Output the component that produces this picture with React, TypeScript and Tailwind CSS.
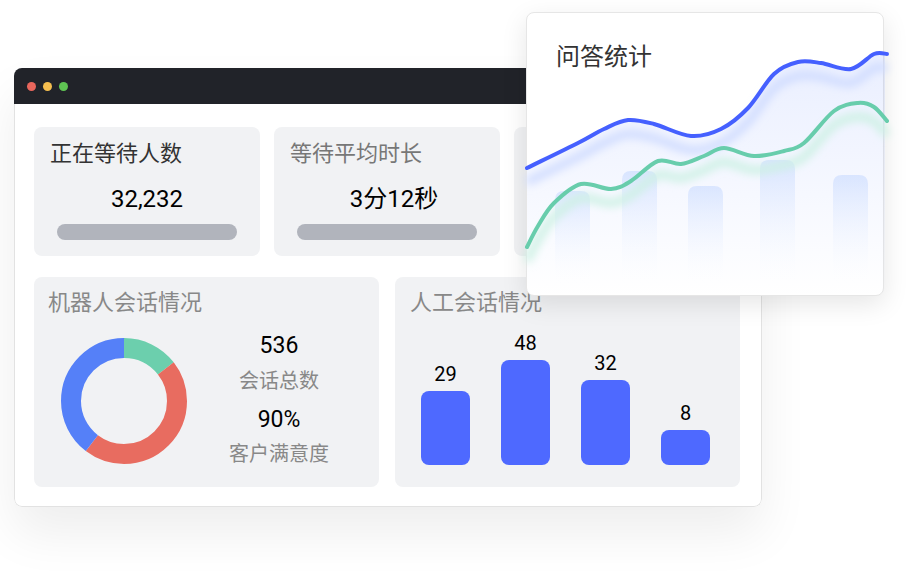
const font = { fontFamily: 'Roboto, "Noto Sans CJK SC", sans-serif' };

type Pt = [number, number];

// catmull-rom -> cubic bezier, so the chart curves pass through the sampled points
function smooth(pts: Pt[]) {
  let d = `M${pts[0][0]},${pts[0][1]}`;
  for (let i = 0; i < pts.length - 1; i++) {
    const p0 = pts[i - 1] || pts[i];
    const p1 = pts[i];
    const p2 = pts[i + 1];
    const p3 = pts[i + 2] || p2;
    const c1x = p1[0] + (p2[0] - p0[0]) / 6;
    const c1y = p1[1] + (p2[1] - p0[1]) / 6;
    const c2x = p2[0] - (p3[0] - p1[0]) / 6;
    const c2y = p2[1] - (p3[1] - p1[1]) / 6;
    d += ` C${c1x.toFixed(1)},${c1y.toFixed(1)} ${c2x.toFixed(1)},${c2y.toFixed(1)} ${p2[0]},${p2[1]}`;
  }
  return d;
}

const bluePts: Pt[] = [
  [0, 155], [51, 130], [77, 116], [101, 107], [127, 111], [164, 123], [194, 116],
  [221, 95], [247, 61], [271, 49], [294, 50], [324, 56], [347, 41], [360, 41],
];
const greenPts: Pt[] = [
  [0, 234], [11, 213], [27, 190], [54, 171], [84, 176], [104, 168], [131, 148],
  [154, 151], [177, 143], [197, 135], [227, 143], [257, 138], [277, 130],
  [307, 98], [331, 90], [347, 94], [360, 108],
];
const bluePath = smooth(bluePts);
const greenPath = smooth(greenPts);

const bgBars = [
  { x: 28, top: 178 },
  { x: 95, top: 158 },
  { x: 161, top: 173 },
  { x: 233, top: 147 },
  { x: 306, top: 162 },
];

function StatCard({ title, value, dark, shift }: { title: string; value: string; dark?: boolean; shift?: boolean }) {
  return (
    <div className="bg-[#f1f2f4] rounded-[8px] h-[129px] pt-[13px] px-[16px]">
      <div className={`text-[22px] leading-[28px] ${dark ? 'text-[#333]' : 'text-[#777]'}`}>{title}</div>
      <div className={`mt-[15px] text-center text-[24px] leading-[32px] text-black ${shift ? 'pl-[14px]' : ''}`}>{value}</div>
      <div className="mt-[9px] mx-[7px] h-[16px] rounded-full bg-[#b1b4bc]" />
    </div>
  );
}

function Donut() {
  const c = 2 * Math.PI * 53;
  const segs = [
    { color: '#6ccfad', from: 0, to: 52 },
    { color: '#e86c60', from: 52, to: 217 },
    { color: '#5580f8', from: 217, to: 360 },
  ];
  return (
    <svg width="126" height="126" viewBox="0 0 126 126">
      <g transform="rotate(-90 63 63)">
        {segs.map((s) => (
          <circle
            key={s.color}
            cx="63"
            cy="63"
            r="53"
            fill="none"
            stroke={s.color}
            strokeWidth="20"
            strokeDasharray={`${((s.to - s.from) / 360) * c} ${c}`}
            strokeDashoffset={-(s.from / 360) * c}
          />
        ))}
      </g>
    </svg>
  );
}

const manual = [
  { v: 29, h: 74 },
  { v: 48, h: 105 },
  { v: 32, h: 85 },
  { v: 8, h: 35 },
];

export default function App() {
  return (
    <div className="relative w-[908px] h-[579px] bg-white overflow-hidden pt-[68px] pl-[14px]" style={font}>
      {/* browser window */}
      <div className="w-[748px] h-[439px] rounded-[8px] overflow-hidden shadow-[0_26px_50px_rgba(0,0,0,0.07)] flex flex-col">
        <div className="h-[36px] bg-[#212329] flex items-center gap-[7px] pl-[13px] shrink-0">
          <span className="w-[9px] h-[9px] rounded-full bg-[#e8665c]" />
          <span className="w-[9px] h-[9px] rounded-full bg-[#f5be4f]" />
          <span className="w-[9px] h-[9px] rounded-full bg-[#5fc453]" />
        </div>
        <div className="flex-1 bg-white border-x border-b border-[#e2e2e2] rounded-b-[8px] pt-[23px] pl-[19px] pr-[21px]">
          <div className="grid grid-cols-3 gap-[14px]">
            <StatCard title="正在等待人数" value="32,232" dark />
            <StatCard title="等待平均时长" value="3分12秒" shift />
            <StatCard title="今日解决率" value="96%" />
          </div>
          <div className="grid grid-cols-2 gap-[16px] mt-[21px]">
            <div className="bg-[#f1f2f4] rounded-[8px] h-[210px] pt-[12px] px-[14px]">
              <div className="text-[22px] leading-[28px] text-[#888]">机器人会话情况</div>
              <div className="flex items-start">
                <div className="mt-[21px] ml-[13px]">
                  <Donut />
                </div>
                <div className="ml-[32px] w-[120px] pt-[14px] flex flex-col items-center">
                  <div className="text-[23px] leading-[30px] text-black">536</div>
                  <div className="mt-[6px] text-[20px] leading-[28px] text-[#888]">会话总数</div>
                  <div className="mt-[10px] text-[23px] leading-[30px] text-black">90%</div>
                  <div className="mt-[5px] text-[20px] leading-[28px] text-[#888]">客户满意度</div>
                </div>
              </div>
            </div>
            <div className="bg-[#f1f2f4] rounded-[8px] h-[210px] pt-[12px] pl-[15px] pb-[22px] flex flex-col">
              <div className="text-[22px] leading-[28px] text-[#888]">人工会话情况</div>
              <div className="flex-1 flex items-end gap-[31px] pl-[11px]">
                {manual.map((b) => (
                  <div key={b.v} className="flex flex-col items-center w-[49px]">
                    <div className="text-[20px] leading-[24px] text-black mb-[5px]">{b.v}</div>
                    <div className="w-[49px] rounded-[8px] bg-[#4e69ff]" style={{ height: b.h }} />
                  </div>
                ))}
              </div>
            </div>
          </div>
        </div>
      </div>

      {/* floating chart card */}
      <div className="absolute left-[526px] top-[12px] w-[358px] h-[284px] bg-white rounded-[8px] border border-[#e6e6e6] shadow-[0_8px_26px_rgba(0,0,0,0.1)]">
        <svg className="absolute inset-0 overflow-visible" width="358" height="284" viewBox="0 0 358 284">
          <defs>
            <linearGradient id="barFill" x1="0" y1="0" x2="0" y2="1">
              <stop offset="0" stopColor="#e2ecff" />
              <stop offset="1" stopColor="#ffffff" stopOpacity="0" />
            </linearGradient>
            <linearGradient id="areaFill" x1="0" y1="0" x2="0" y2="1">
              <stop offset="0" stopColor="#5a80ff" stopOpacity="0.13" />
              <stop offset="1" stopColor="#5a80ff" stopOpacity="0" />
            </linearGradient>
            <filter id="glow" x="-10%" y="-30%" width="120%" height="160%">
              <feGaussianBlur stdDeviation="4" />
            </filter>
          </defs>
          {bgBars.map((b) => (
            <path
              key={b.x}
              d={`M${b.x},273 V${b.top + 9} Q${b.x},${b.top} ${b.x + 9},${b.top} H${b.x + 26} Q${b.x + 35},${b.top} ${b.x + 35},${b.top + 9} V273 Z`}
              fill="url(#barFill)"
            />
          ))}
          <path d={`${bluePath} L358,41 L358,276 Q358,284 350,284 L8,284 Q0,284 0,276 Z`} fill="url(#areaFill)" />
          <g filter="url(#glow)" transform="translate(0 14)">
            <path d={bluePath} fill="none" stroke="#cfdbff" strokeWidth="8" />
            <path d={greenPath} fill="none" stroke="#cdf1e4" strokeWidth="8" />
          </g>
          <path d={bluePath} fill="none" stroke="#4560ff" strokeWidth="4" strokeLinecap="round" />
          <path d={greenPath} fill="none" stroke="#68cdac" strokeWidth="4" strokeLinecap="round" />
        </svg>
        <div className="relative pt-[28px] pl-[29px] text-[24px] leading-[32px] text-[#333]">问答统计</div>
      </div>
    </div>
  );
}
